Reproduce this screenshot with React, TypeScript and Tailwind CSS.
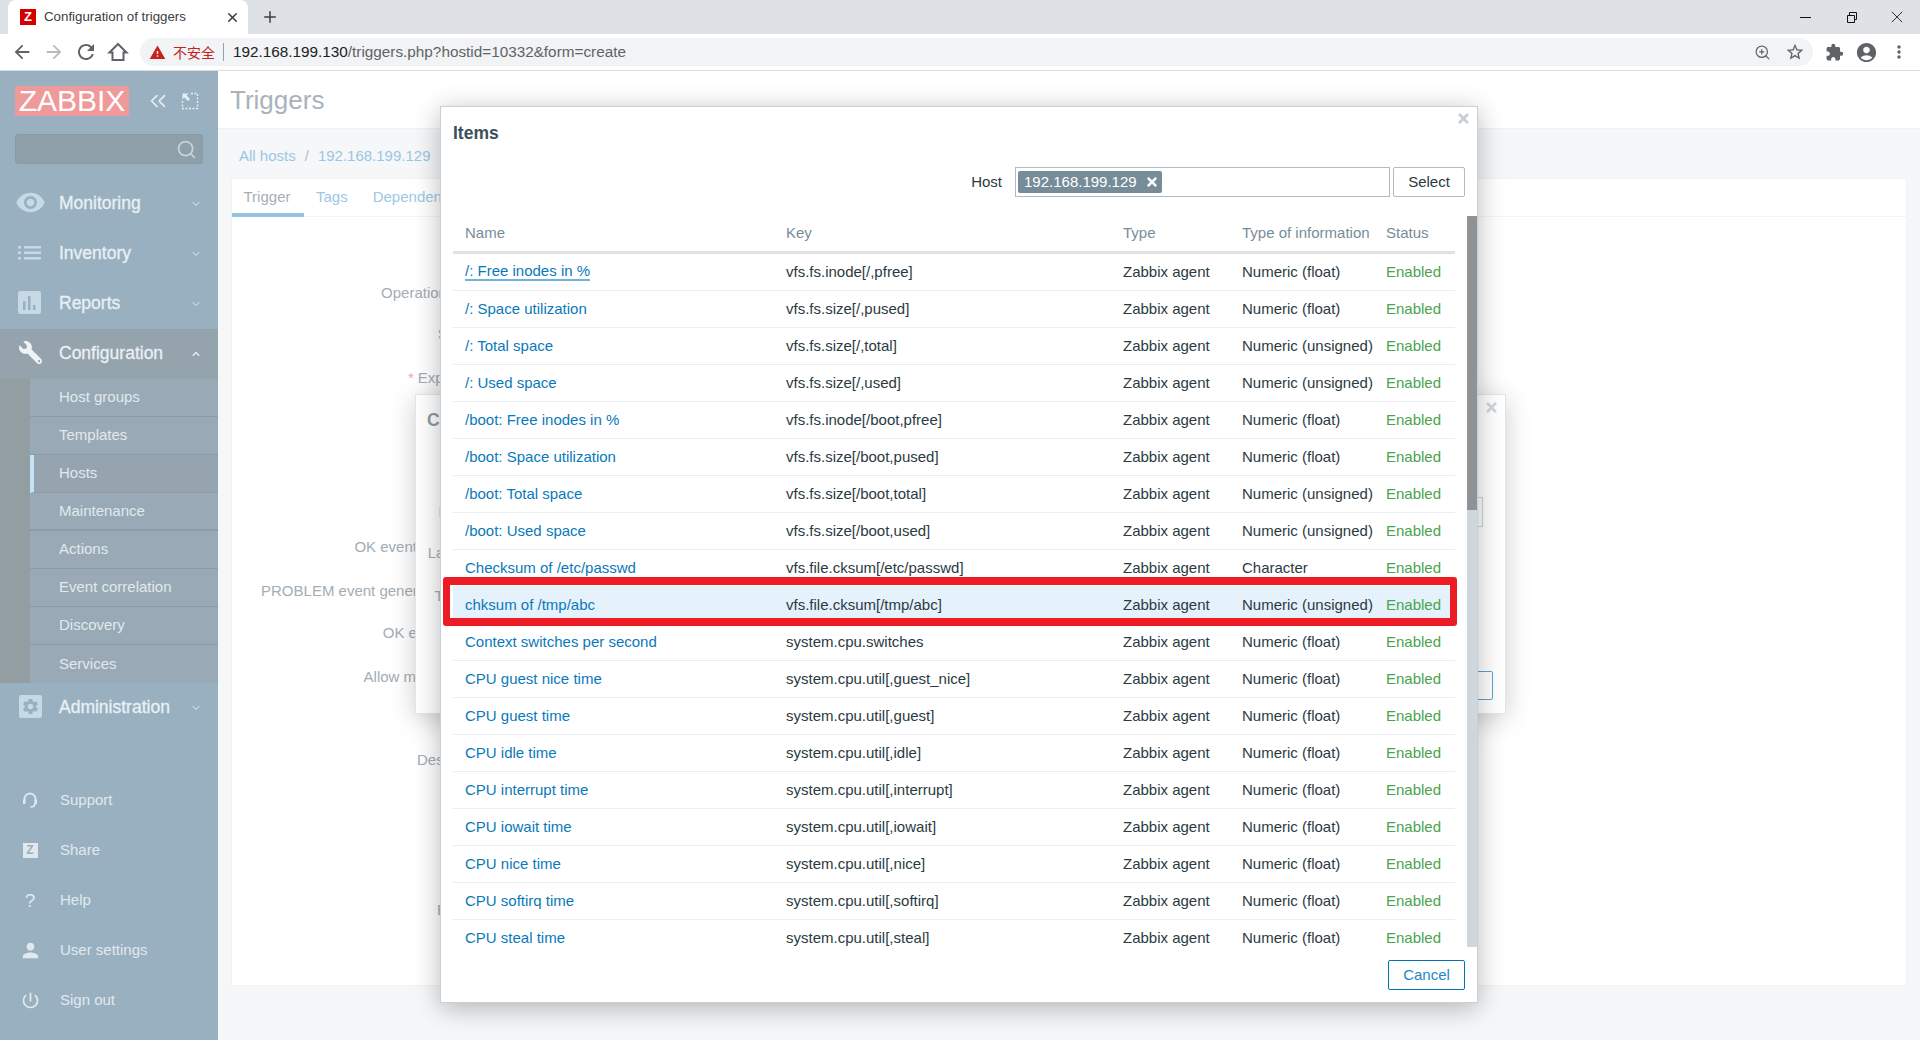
import React from 'react'
import { ChevronDown, ChevronUp, ChevronsLeft, Plus, Search, X, ZoomIn } from 'lucide-react'
import {
  MdAccountCircle,
  MdArrowBack,
  MdArrowForward,
  MdExtension,
  MdMoreVert,
  MdPerson,
  MdPowerSettingsNew,
  MdRefresh,
  MdRemoveRedEye,
  MdSettings,
  MdStarBorder,
  MdWarning,
} from 'react-icons/md'
import { FaTimes, FaWrench } from 'react-icons/fa'

const items = [
  ['/: Free inodes in %', 'vfs.fs.inode[/,pfree]', 'Numeric (float)'],
  ['/: Space utilization', 'vfs.fs.size[/,pused]', 'Numeric (float)'],
  ['/: Total space', 'vfs.fs.size[/,total]', 'Numeric (unsigned)'],
  ['/: Used space', 'vfs.fs.size[/,used]', 'Numeric (unsigned)'],
  ['/boot: Free inodes in %', 'vfs.fs.inode[/boot,pfree]', 'Numeric (float)'],
  ['/boot: Space utilization', 'vfs.fs.size[/boot,pused]', 'Numeric (float)'],
  ['/boot: Total space', 'vfs.fs.size[/boot,total]', 'Numeric (unsigned)'],
  ['/boot: Used space', 'vfs.fs.size[/boot,used]', 'Numeric (unsigned)'],
  ['Checksum of /etc/passwd', 'vfs.file.cksum[/etc/passwd]', 'Character'],
  ['chksum of /tmp/abc', 'vfs.file.cksum[/tmp/abc]', 'Numeric (unsigned)'],
  ['Context switches per second', 'system.cpu.switches', 'Numeric (float)'],
  ['CPU guest nice time', 'system.cpu.util[,guest_nice]', 'Numeric (float)'],
  ['CPU guest time', 'system.cpu.util[,guest]', 'Numeric (float)'],
  ['CPU idle time', 'system.cpu.util[,idle]', 'Numeric (float)'],
  ['CPU interrupt time', 'system.cpu.util[,interrupt]', 'Numeric (float)'],
  ['CPU iowait time', 'system.cpu.util[,iowait]', 'Numeric (float)'],
  ['CPU nice time', 'system.cpu.util[,nice]', 'Numeric (float)'],
  ['CPU softirq time', 'system.cpu.util[,softirq]', 'Numeric (float)'],
  ['CPU steal time', 'system.cpu.util[,steal]', 'Numeric (float)'],
]

const subMenu = ['Host groups', 'Templates', 'Hosts', 'Maintenance', 'Actions', 'Event correlation', 'Discovery', 'Services']

const formRows = [
  { label: 'Operational data', cls: 'mt-0' },
  { label: 'Severity', cls: 'mt-[3px]' },
  { label: 'Expression', cls: 'mt-[6px]', required: true },
  { label: 'OK event generation', cls: 'mt-[131px]' },
  { label: 'PROBLEM event generation mode', cls: 'mt-[6px]' },
  { label: 'OK event closes', cls: 'mt-[4px]' },
  { label: 'Allow manual close', cls: 'mt-[6px]' },
  { label: 'Description', cls: 'mt-[45px]' },
  { label: 'Enabled', cls: 'mt-[112px]' },
]

const rowGrid = 'grid grid-cols-[321px_337px_119px_144px_81px] items-center'

function BarsIcon() {
  return (
    <svg width="24" height="24" viewBox="0 0 24 24">
      <rect width="23" height="23" rx="2" fill="#c6d9e5" />
      <rect x="5" y="10" width="2.5" height="9" fill="#99b0c0" />
      <rect x="10" y="5" width="2.5" height="14" fill="#99b0c0" />
      <rect x="15" y="14" width="2.5" height="5" fill="#99b0c0" />
    </svg>
  )
}

function ListIcon() {
  return (
    <svg width="24" height="16" viewBox="0 0 24 16" fill="#c6d9e5">
      <rect y="1" width="3" height="2.5" />
      <rect y="6.5" width="3" height="2.5" />
      <rect y="12" width="3" height="2.5" />
      <rect x="6" y="1" width="17" height="2.5" />
      <rect x="6" y="6.5" width="17" height="2.5" />
      <rect x="6" y="12" width="17" height="2.5" />
    </svg>
  )
}

function GearIcon() {
  return (
    <div className="w-[23px] h-[23px] rounded-[2px] bg-[#c6d9e5] flex items-center justify-center">
      <MdSettings size={19} className="text-[#99b0c0]" />
    </div>
  )
}

function MenuItem({ icon, label, open }: { icon: React.ReactNode; label: string; open?: boolean }) {
  return (
    <div className={`flex items-center h-[50px] ${open ? 'bg-[#95a3ac]' : ''}`}>
      <div className="w-[59px] flex justify-center pl-[1px] -mt-[3px]">{icon}</div>
      <span className="flex-1 pb-[1px] text-[17.5px] text-[#e9f0f5] [-webkit-text-stroke:0.3px_#e9f0f5]">{label}</span>
      {open ? (
        <ChevronUp size={12} strokeWidth={2.2} className="mr-[16px] text-[#f0f5f8]" />
      ) : (
        <ChevronDown size={12} strokeWidth={1.8} className="mr-[16px] text-[#e9f0f5]" />
      )}
    </div>
  )
}

function FootItem({ icon, label }: { icon: React.ReactNode; label: string }) {
  return (
    <div className="flex items-center h-[50px]">
      <div className="w-[60px] flex justify-center">{icon}</div>
      <span className="text-[15px] text-[#e1e9ee]">{label}</span>
    </div>
  )
}

function Sidebar() {
  return (
    <aside className="w-[218px] shrink-0 bg-[#99b0c0] flex flex-col">
      <div className="flex items-center pl-[15px] pt-[15px]">
        <div className="w-[114px] h-[30px] bg-[#ef9a9a] text-white text-[30px] leading-[30px] text-center">ZABBIX</div>
        <ChevronsLeft size={26} strokeWidth={1.5} className="ml-[16px] text-[#e6eef3]" />
        <svg width="18" height="18" viewBox="0 0 18 18" className="ml-[10px]" fill="none" stroke="#e6eef3" strokeWidth="1.4">
          <path d="M10 1.5h6.5V16.5H1.5V8" strokeDasharray="2 1.5" />
          <path d="M1.5 1.5h6l-2 2 3.5 3.5-2 2-3.5-3.5-2 2z" fill="#e6eef3" stroke="none" />
        </svg>
      </div>
      <div className="mx-[15px] mt-[18px] h-[30px] bg-[#8f9fa8] border border-[#869aa7] rounded-[3px] flex items-center justify-end pr-[5px]">
        <Search size={21} strokeWidth={2} className="text-[#c3d3dc]" />
      </div>
      <div className="mt-[15px]">
        <MenuItem icon={<MdRemoveRedEye size={31} className="text-[#c6d9e5]" />} label="Monitoring" />
        <MenuItem icon={<ListIcon />} label="Inventory" />
        <MenuItem icon={<BarsIcon />} label="Reports" />
        <MenuItem icon={<FaWrench size={23} className="text-[#eef3f6] -scale-x-100" />} label="Configuration" open />
        <div className="bg-[#939ea3] pl-[30px]">
          {subMenu.map((name, i) => (
            <div
              key={name}
              className={`h-[38px] flex items-center text-[15px] text-[#e1e9ee] ${
                i === 7 ? '' : i === 3 ? 'border-b-2 border-[#8e9ba4]' : 'border-b border-[#8e9ba4]'
              } ${i === 2 ? 'bg-[#95a4af] border-l-4 border-l-[#c5e3f7] pl-[25px]' : 'bg-[#99a9b5] pl-[29px]'}`}
            >
              {name}
            </div>
          ))}
        </div>
        <MenuItem icon={<GearIcon />} label="Administration" />
      </div>
      <div className="mt-[42px]">
        <FootItem
          icon={
            <svg width="16" height="17" viewBox="0 0 16 17" fill="none" stroke="#e1e9ee" strokeWidth="1.8">
              <path d="M2.5 9V7a5.5 5.5 0 0 1 11 0v2" />
              <path d="M13 11c0 3-2 4-4.500 4" />
              <rect x="1" y="7.500" width="2.500" height="4.500" fill="#e1e9ee" stroke="none" />
              <rect x="12.500" y="7.500" width="2.500" height="4.500" fill="#e1e9ee" stroke="none" />
            </svg>
          }
          label="Support"
        />
        <FootItem
          icon={
            <div className="w-[15px] h-[15px] bg-[#e1e9ee] text-[#99b0c0] text-[12px] leading-[15px] font-bold text-center">Z</div>
          }
          label="Share"
        />
        <FootItem icon={<span className="text-[19px] text-[#e1e9ee] leading-none">?</span>} label="Help" />
        <FootItem icon={<MdPerson size={23} className="text-[#e1e9ee]" />} label="User settings" />
        <FootItem icon={<MdPowerSettingsNew size={21} className="text-[#e1e9ee]" />} label="Sign out" />
      </div>
    </aside>
  )
}

function TriggerForm() {
  return (
    <main className="flex-1 bg-[#f5f7f9] flex flex-col">
      <div className="h-[58px] bg-white border-b border-[#eff1f3] pl-[12px] flex items-center">
        <h1 className="text-[26px] text-[#a9b3ba] mt-[1px]">Triggers</h1>
      </div>
      <div className="h-[49px] pl-[21px] pt-[5px] flex items-center gap-[9px] text-[15px] text-[#9bc6e4]">
        <span>All hosts</span>
        <span className="text-[#b4bdc4]">/</span>
        <span>192.168.199.129</span>
      </div>
      <div className="ml-[13px] mr-[13px] h-[808px] bg-white border border-[#f0f2f4]">
        <div className="h-[38px] flex border-b border-[#f2f4f6] text-[15px]">
          <div className="w-[72px] pr-[2px] pt-[2px] text-center text-[#a6afb6] border-b-4 border-[#94c3e2] h-[38px] flex items-center justify-center">Trigger</div>
          <div className="ml-[12px] text-[#9cc8e6] flex items-center">Tags</div>
          <div className="ml-[25px] text-[#9cc8e6] flex items-center">Dependencies</div>
        </div>
        <div className="pt-[57px] flex flex-col">
          {formRows.map((r) => (
            <div key={r.label} className={`h-[38px] w-[260px] flex items-center justify-end text-[15px] text-[#a3adb4] ${r.cls}`}>
              {r.required && <span className="text-[#f2a6a6] mr-[4px]">*</span>}
              {r.label}
            </div>
          ))}
        </div>
      </div>
    </main>
  )
}

function ConditionDialog() {
  return (
    <div className="absolute left-[415px] top-[394px] w-[1091px] h-[320px] bg-white border border-[#e2e6e9] shadow-[0_5px_25px_rgba(0,0,0,0.2)] flex flex-col text-[15px] text-[#a3adb4]">
      <FaTimes size={15} className="absolute right-[6px] top-[5px] text-[#d0d8dd]" />
      <div className="h-[50px] pl-[11px] flex items-center text-[17.5px] font-bold text-[#8c9aa3]">Condition</div>
      <div className="h-[30px] mt-[52px] flex items-center">
        <span className="w-[80px] text-right">Function</span>
        <div className="ml-auto mr-[22px] w-[900px] h-[30px] border border-[#cdd5da]" />
      </div>
      <div className="h-[30px] mt-[11px] flex items-center">
        <span className="w-[80px] text-right">Last of (T)</span>
      </div>
      <div className="h-[30px] mt-[13px] flex items-center">
        <span className="w-[83px] text-right">Time shift</span>
      </div>
      <div className="self-end mt-[60px] mr-[12px] w-[90px] h-[29px] border border-[#5aa5d6] rounded-[2px]" />
    </div>
  )
}

function ItemsDialog() {
  return (
    <div className="absolute left-[440px] top-[106px] w-[1038px] h-[897px] bg-white border border-[#c6d0d8] shadow-[0_5px_25px_rgba(0,0,0,0.28)] flex flex-col text-[15px] text-[#2b3a42]">
      <FaTimes size={15} className="absolute right-[6px] top-[4px] text-[#c3ced6]" />
      <div className="h-[60px] pl-[12px] pt-[16px] text-[17.5px] leading-[20px] font-bold text-[#3d4f5c]">Items</div>
      <div className="h-[30px] flex items-center justify-end pr-[12px]">
        <span className="mr-[13px]">Host</span>
        <div className="w-[375px] h-[30px] border border-[#acbbc4] flex items-center pl-[2px]">
          <div className="h-[22px] w-[144px] bg-[#768d99] rounded-[2px] text-white flex items-center pl-[6px]">
            192.168.199.129
            <FaTimes size={14} className="ml-[8px]" />
          </div>
        </div>
        <button className="ml-[3px] w-[72px] h-[30px] border border-[#acbbc4] rounded-[2px]">Select</button>
      </div>
      <div className="relative mt-[19px] h-[731px] overflow-hidden pl-[12px]">
        <div className="absolute right-0 top-0 bottom-0 w-[10px] bg-[#ced7de]">
          <div className="h-[294px] bg-[#8f9396]" />
        </div>
        <div className="w-[1002px]">
          <div className={`${rowGrid} h-[38px] border-b-[3px] border-[#dee3e7] pl-[12px] text-[#768d99]`}>
            <span>Name</span>
            <span>Key</span>
            <span>Type</span>
            <span>Type of information</span>
            <span>Status</span>
          </div>
          {items.map(([name, key, info], i) => (
            <div
              key={name}
              className={`${rowGrid} relative h-[37px] border-b border-[#ebeef0] pl-[12px] ${i === 9 ? 'bg-[#e5f2fb]' : ''}`}
            >
              <span className={`text-[#0a79ba] ${i === 0 ? 'justify-self-start border-b-2 border-[#6fb2dc] leading-[16px]' : ''}`}>{name}</span>
              <span>{key}</span>
              <span>Zabbix agent</span>
              <span>{info}</span>
              <span className="text-[#4aa34f]">Enabled</span>
              {i === 9 && (
                <div className="absolute -left-[10px] -top-[10px] -right-[2px] -bottom-[3px] border-x-[7px] border-y-[8px] border-[#ed1c24] rounded-[3px]" />
              )}
            </div>
          ))}
        </div>
      </div>
      <div className="flex justify-end pt-[13px] pr-[12px]">
        <button className="w-[77px] h-[30px] border border-[#0275b8] rounded-[2px] text-[#1f87c5]">Cancel</button>
      </div>
    </div>
  )
}

export default function App() {
  return (
    <div className="relative w-[1920px] h-[1040px] overflow-hidden flex flex-col font-['Liberation_Sans',Arial,sans-serif] bg-white">
      <div className="h-[34px] shrink-0 bg-[#dee1e6] flex items-center pl-[8px]">
        <div className="w-[240px] h-[34px] bg-white rounded-t-[8px] flex items-center pl-[12px] pr-[8px]">
          <div className="w-[16px] h-[16px] bg-[#d40000] text-white text-[13px] leading-[16px] font-bold text-center">Z</div>
          <span className="ml-[8px] flex-1 text-[13.3px] text-[#3c4043]">Configuration of triggers</span>
          <X size={15} strokeWidth={2.5} className="text-[#3c4043]" />
        </div>
        <Plus size={18} strokeWidth={2} className="ml-[13px] text-[#3c4043]" />
        <div className="ml-auto flex items-center text-[#111]">
          <svg width="46" height="28" viewBox="0 0 46 28" fill="none" stroke="currentColor">
            <path d="M18 14.500h11" />
          </svg>
          <svg width="46" height="28" viewBox="0 0 46 28" fill="none" stroke="currentColor">
            <path d="M19.500 12.500h7v7h-7zM21.500 12v-2.500h7v7H27" />
          </svg>
          <div className="w-[46px] flex justify-center">
            <X size={20} strokeWidth={1} />
          </div>
        </div>
      </div>
      <div className="h-[37px] shrink-0 bg-white border-b border-[#dadce0] flex items-center pl-[11px]">
        <MdArrowBack size={22} className="text-[#5f6368]" />
        <MdArrowForward size={22} className="ml-[10px] text-[#b8babd]" />
        <MdRefresh size={24} className="ml-[9px] text-[#5f6368]" />
        <svg width="22" height="22" viewBox="0 0 22 22" fill="none" stroke="#5f6368" strokeWidth="2" className="ml-[9px]">
          <path d="M11 3 2.500 11.500H5.500V19H16.500V11.500H19.500Z" />
        </svg>
        <div className="ml-[11px] w-[1673px] h-[28px] rounded-full bg-[#f1f3f4] flex items-center pl-[9px]">
          <MdWarning size={17} className="text-[#c5221f]" />
          <span className="ml-[7px] text-[14px] text-[#c5221f] font-['Noto_Sans_CJK_SC',sans-serif]">不安全</span>
          <span className="ml-[8px] h-[18px] border-l border-[#9aa0a6]" />
          <span className="ml-[9px] text-[15.3px] text-[#202124]">
            192.168.199.130<span className="text-[#5f6368]">/triggers.php?hostid=10332&amp;form=create</span>
          </span>
          <ZoomIn size={17} strokeWidth={1.7} className="ml-auto text-[#5f6368]" />
          <MdStarBorder size={20} className="ml-[14px] mr-[8px] text-[#5f6368]" />
        </div>
        <MdExtension size={19} className="ml-[12px] text-[#5f6368]" />
        <MdAccountCircle size={23} className="ml-[11px] text-[#5f6368]" />
        <MdMoreVert size={20} className="ml-[11px] text-[#5f6368]" />
      </div>
      <div className="flex-1 flex min-h-0">
        <Sidebar />
        <TriggerForm />
      </div>
      <ConditionDialog />
      <ItemsDialog />
    </div>
  )
}
